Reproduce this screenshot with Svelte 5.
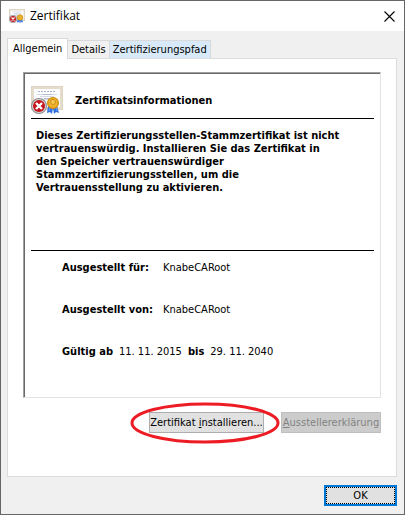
<script lang="ts">
  const tabs = ['Allgemein', 'Details', 'Zertifizierungspfad'];
  const issuedTo = 'KnabeCARoot';
  const issuedBy = 'KnabeCARoot';
  const validFrom = '11. 11. 2015';
  const validTo = '29. 11. 2040';

  let active = $state('Allgemein');
</script>

{#snippet certIcon(size: number)}
  <svg class="cert-icon" width={size} height={size} viewBox="0 0 32 32" aria-hidden="true">
    <rect x="0.5" y="2.5" width="31" height="23" fill="#e6dccb" stroke="#c9bba6" />
    <rect x="0.5" y="2.5" width="31" height="23" fill="none" stroke="#f4eee3" stroke-dasharray="1 1" />
    <rect x="3" y="5" width="26" height="18" fill="#fbfcfe" />
    <path d="M7 7.5h18" stroke="#a9b3cf" stroke-dasharray="2 1" />
    <path d="M6 10.5h20M9 12.5h14M8 15.5h17" stroke="#d5dae6" />
    <path d="M12 10.5h9M13 14.5h6" stroke="#b3bdd5" />
    <path d="M17 22l-1 7 3-1 2 2 1-6zM26 22l2 7-3-1-2 2-1-6z" fill="#2f6fe0" />
    <path d="M19 23l-1 4M25 23l1 4" stroke="#6ba4ff" />
    <circle cx="22" cy="19" r="6" fill="#c98a10" />
    <circle cx="22" cy="19" r="5" fill="#eeb32a" stroke="#dc9c18" />
    <circle cx="22" cy="18" r="2.5" fill="#f6c84c" stroke="#c98f1c" />
    <circle cx="8" cy="22" r="8" fill="#8d8d8d" />
    <circle cx="8" cy="22" r="7" fill="#d4d4d4" />
    <circle cx="8" cy="22" r="6" fill="#c4161c" />
    <path d="M5 19l6 6M11 19l-6 6" stroke="#fff" stroke-width="2.4" />
  </svg>
{/snippet}

<main class="dialog">
  <header>
    {@render certIcon(16)}
    <h1>Zertifikat</h1>
    <button class="close" aria-label="Schließen">
      <svg width="11" height="11" viewBox="0 0 11 11" aria-hidden="true">
        <path d="M0.5 0.5l10 10M10.5 0.5l-10 10" stroke="#000" stroke-width="1.1" />
      </svg>
    </button>
  </header>

  <div class="tabs" role="tablist">
    {#each tabs as tab, i}
      <button
        role="tab"
        class:active={active === tab}
        class:hot={i === 2}
        aria-selected={active === tab}
        onclick={() => (active = tab)}
      >{tab}</button>
    {/each}
  </div>

  <div class="panel" role="tabpanel">
    {#if active === 'Allgemein'}
      <div class="sheet">
        <div class="heading">
          {@render certIcon(32)}
          <h2>Zertifikatsinformationen</h2>
        </div>
        <p class="message">
          Dieses Zertifizierungsstellen-Stammzertifikat ist nicht<br />
          vertrauenswürdig. Installieren Sie das Zertifikat in<br />
          den Speicher vertrauenswürdiger<br />
          Stammzertifizierungsstellen, um die<br />
          Vertrauensstellung zu aktivieren.
        </p>
        <dl>
          <div><dt>Ausgestellt für:</dt><dd>{issuedTo}</dd></div>
          <div><dt>Ausgestellt von:</dt><dd>{issuedBy}</dd></div>
          <div class="validity">
            <dt>Gültig ab</dt><dd>{validFrom}</dd>
            <dt>bis</dt><dd>{validTo}</dd>
          </div>
        </dl>
      </div>
      <div class="actions">
        <div class="marked">
          <button class="btn">Zertifikat <u>i</u>nstallieren...</button>
          <svg class="marker" width="150" height="42" viewBox="0 0 150 42" aria-hidden="true">
            <ellipse cx="75" cy="21" rx="73" ry="19" fill="none" stroke="#ed1c24" stroke-width="3" />
          </svg>
        </div>
        <button class="btn" disabled><u>A</u>usstellererklärung</button>
      </div>
    {/if}
  </div>

  <footer>
    <button class="btn ok"><span>OK</span></button>
  </footer>
</main>

<style>
  :global(body) {
    margin: 0;
  }

  .dialog {
    box-sizing: border-box;
    min-height: 100vh;
    display: flex;
    flex-direction: column;
    border: 1px solid #666;
    background: #f0f0f0;
    color: #000;
    font-family: "DejaVu Sans Condensed", Tahoma, sans-serif;
    font-size: 11px;
    line-height: 13px;
  }

  header {
    display: flex;
    align-items: center;
    height: 30px;
    padding: 0 9px 0 8px;
    background: #fff;
  }

  h1 {
    flex: 1;
    margin: 0 0 0 5px;
    font: 12px/16px "Open Sans", "Segoe UI", sans-serif;
  }

  h2 {
    margin: 0;
    font-size: 11px;
  }

  button {
    font: inherit;
    color: inherit;
    margin: 0;
    white-space: nowrap;
  }

  .close {
    display: flex;
    padding: 0;
    border: 0;
    background: none;
  }

  .cert-icon {
    display: block;
    flex: none;
  }

  .tabs {
    display: flex;
    align-items: flex-end;
    padding: 7px 6px 0;
  }

  .tabs button {
    height: 18px;
    padding: 0 3px;
    border: 1px solid #d9d9d9;
    border-left-width: 0;
    border-bottom: 0;
    background: #f0f0f0;
  }

  .tabs button.hot {
    background: #d8eaf9;
  }

  .tabs button.active {
    position: relative;
    height: 21px;
    margin-bottom: -1px;
    padding: 0 5px 2px;
    border-left-width: 1px;
    background: #fff;
  }

  .panel {
    flex: 1;
    margin: 0 7px 0 6px;
    padding: 13px 15px 0;
    border: 1px solid #dcdcdc;
    background: #fff;
  }

  .sheet {
    padding: 11px 6px 39px 7px;
    border: 1px solid #e3e3e3;
    border-top-color: #a0a0a0;
    border-left-color: #a0a0a0;
    box-shadow: inset 1px 1px #696969;
  }

  .heading {
    display: flex;
    align-items: center;
    gap: 12px;
    padding-bottom: 2px;
    border-bottom: 1px solid #000;
  }

  .message {
    margin: 0;
    padding: 10px 0 56px 5px;
    border-bottom: 1px solid #000;
    font-weight: bold;
    white-space: nowrap;
  }

  dl {
    display: flex;
    flex-direction: column;
    gap: 29px;
    margin: 0;
    padding: 10px 0 0 31px;
  }

  dl div {
    display: flex;
  }

  dt {
    width: 101px;
    font-weight: bold;
  }

  dd {
    margin: 0;
  }

  .validity {
    gap: 6px;
  }

  .validity dt {
    width: auto;
  }

  .actions {
    display: flex;
    justify-content: flex-end;
    gap: 17px;
    margin-top: 14px;
  }

  .marked {
    position: relative;
  }

  .marker {
    position: absolute;
    top: -10px;
    left: -19px;
    pointer-events: none;
  }

  .btn {
    height: 21px;
    min-width: 100px;
    padding: 0;
    border: 1px solid #adadad;
    background: #e1e1e1;
  }

  .marked .btn {
    min-width: 115px;
  }

  .btn:disabled {
    border-color: #bfbfbf;
    background: #ccc;
    color: #838383;
  }

  footer {
    display: flex;
    justify-content: flex-end;
    padding: 8px 7px;
  }

  .btn.ok {
    width: 73px;
    min-width: 0;
    border: 2px solid #0078d7;
  }

  .ok span {
    display: block;
    border: 1px dotted #000;
    line-height: 15px;
  }
</style>
